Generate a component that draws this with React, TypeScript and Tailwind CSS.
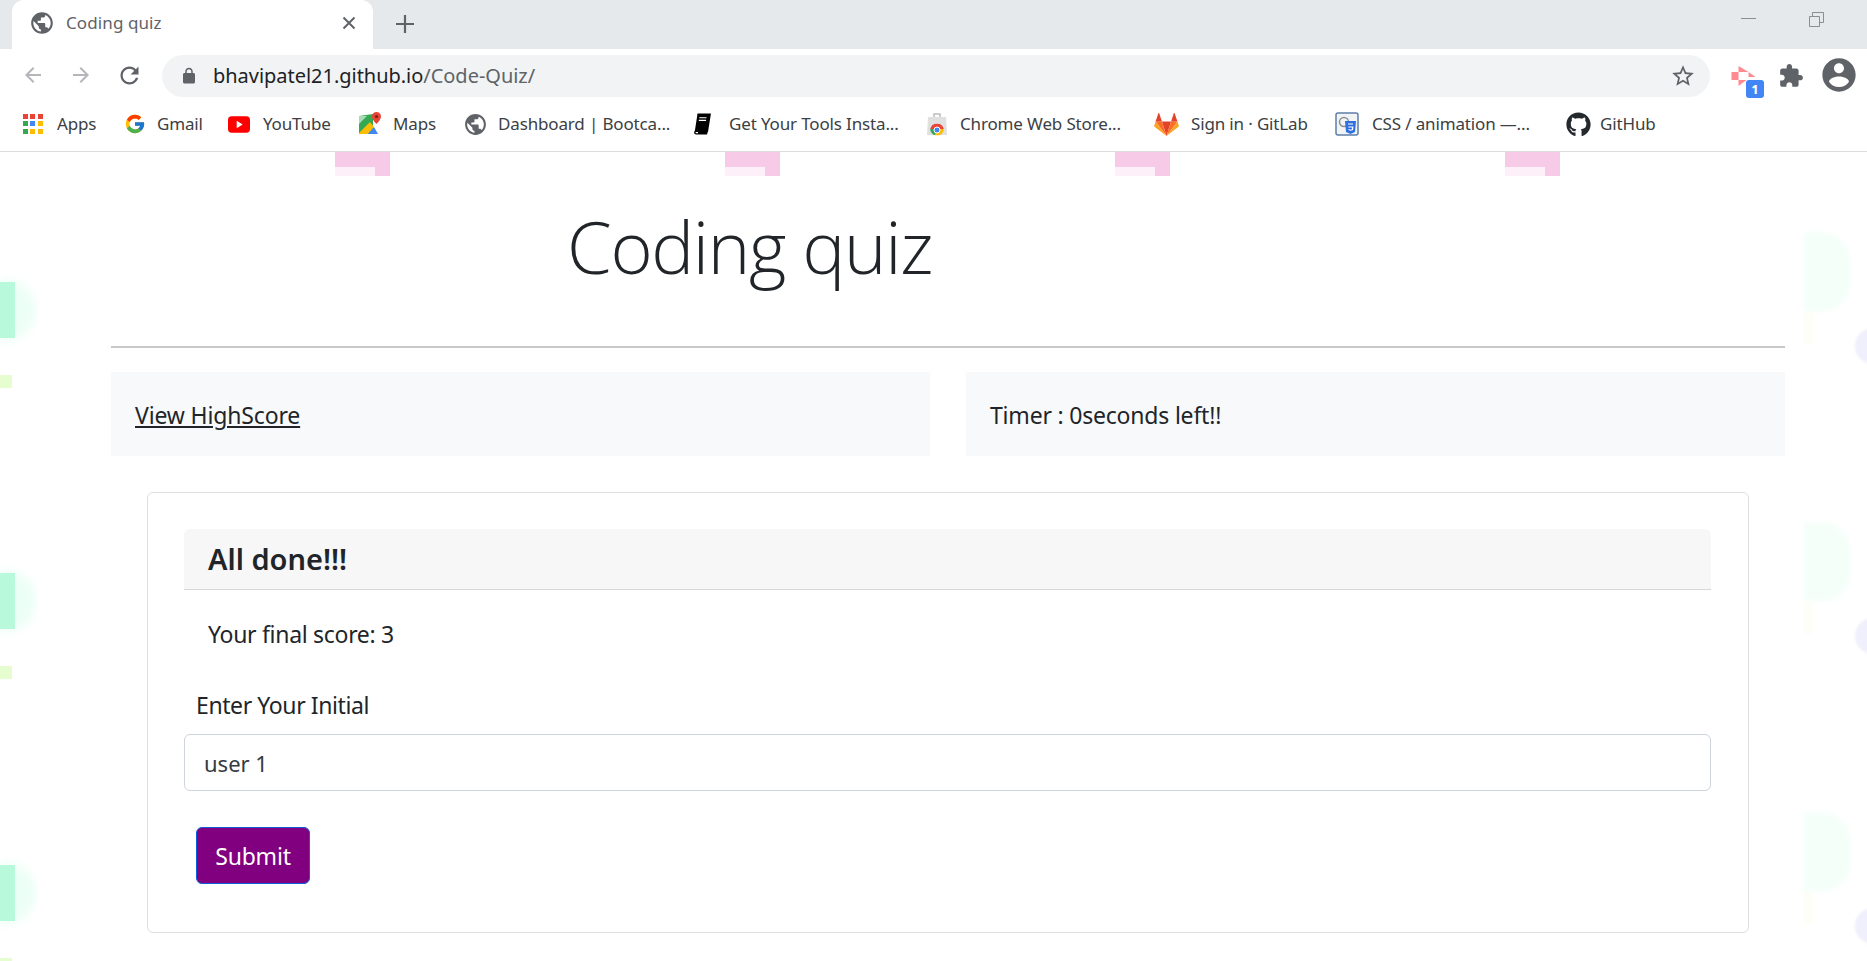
import { FaGithub } from 'react-icons/fa'
import { FcGoogle } from 'react-icons/fc'

const GLOBE = 'M12 2C6.48 2 2 6.48 2 12s4.48 10 10 10 10-4.48 10-10S17.52 2 12 2zm-1 17.93c-3.95-.49-7-3.85-7-7.93 0-.62.08-1.21.21-1.79L9 15v1c0 1.1.9 2 2 2v1.93zm6.9-2.54c-.26-.81-1-1.39-1.9-1.39h-1v-3c0-.55-.45-1-1-1H8v-2h2c.55 0 1-.45 1-1V7h2c1.1 0 2-.9 2-2v-.41c2.93 1.19 5 4.06 5 7.41 0 2.08-.8 3.97-2.1 5.39z'

function MaterialIcon({ d, className }: { d: string; className: string }) {
  return (
    <svg viewBox="0 0 24 24" fill="currentColor" className={className}>
      <path d={d} />
    </svg>
  )
}

function AppsIcon() {
  const colors = ['#ea4335', '#ea4335', '#ea4335', '#34a853', '#4285f4', '#fbbc04', '#34a853', '#fbbc04', '#fbbc04']
  return (
    <div className="grid grid-cols-3 gap-[2px] w-[20px] h-[20px]">
      {colors.map((c, i) => (
        <span key={i} className="block w-[5px] h-[5px]" style={{ backgroundColor: c }} />
      ))}
    </div>
  )
}

function YoutubeIcon() {
  return (
    <svg viewBox="0 0 24 18" className="w-[22px] h-[17px]">
      <rect width="24" height="18" rx="4" fill="#f00" />
      <path d="M9.5 5l6.5 4-6.5 4z" fill="#fff" />
    </svg>
  )
}

function MapsIcon() {
  return (
    <svg viewBox="0 0 24 24" className="w-[24px] h-[24px]">
      <path d="M1 4l14-2v20H1z" fill="#34a853" />
      <path d="M1 21L12 10l4 5-6 7H1z" fill="#fbbc04" />
      <path d="M10 22l6-7 4 7z" fill="#4285f4" />
      <path d="M1 4h8L1 12z" fill="#a8dab5" />
      <path d="M18.5 0a4.5 4.5 0 0 0-4.5 4.5c0 3.2 4.5 7.5 4.5 7.5S23 7.700 23 4.500A4.500 4.500 0 0 0 18.500 0z" fill="#ea4335" />
      <circle cx="18.500" cy="4.500" r="1.600" fill="#7c1d16" />
    </svg>
  )
}

function BookIcon() {
  return (
    <svg viewBox="0 0 20 24" className="w-[18px] h-[22px]">
      <path d="M5 1h14l-3 19H3a2 2 0 0 0-1 1.500C2 23 3 23 3.500 23H15l.3-1.500H5.500" fill="none" stroke="#000" strokeWidth="1.600" />
      <path d="M5 1h14l-3 19H2z" fill="#000" />
      <path d="M7 5h8M6.500 8h8" stroke="#fff" strokeWidth="1.200" />
    </svg>
  )
}

function WebStoreIcon() {
  return (
    <svg viewBox="0 0 24 24" className="w-[24px] h-[24px]">
      <path d="M9 5V2h6v3" fill="none" stroke="#bdbdbd" strokeWidth="1.500" />
      <path d="M3 5h18l1 18H2z" fill="#e0e0e0" />
      <path d="M5.200 17a7 7 0 0 1 13.600 0h-6.800z" fill="#ea4335" />
      <path d="M5.200 17a7 7 0 0 0 5 6.300L12 17z" fill="#34a853" />
      <path d="M18.800 17a7 7 0 0 1-5 6.300H10L12 17z" fill="#fbbc04" />
      <circle cx="12" cy="18" r="3" fill="#4285f4" stroke="#fff" strokeWidth="1" />
    </svg>
  )
}

function GitlabIcon() {
  return (
    <svg viewBox="0 0 24 24" className="w-[25px] h-[25px]">
      <path d="M12 23L16.400 9H7.600z" fill="#e24329" />
      <path d="M12 23L7.600 9H1.500z" fill="#fc6d26" />
      <path d="M1.500 9L.2 13.200c-.1.400 0 .800.300 1L12 23z" fill="#fca326" />
      <path d="M1.500 9h6.100L5 1.200c-.1-.400-.700-.400-.800 0z" fill="#e24329" />
      <path d="M12 23l4.400-14h6.100z" fill="#fc6d26" />
      <path d="M22.500 9l1.300 4.200c.1.400 0 .800-.300 1L12 23z" fill="#fca326" />
      <path d="M22.500 9h-6.100L19 1.200c.1-.400.700-.400.800 0z" fill="#e24329" />
    </svg>
  )
}

function CssIcon() {
  return (
    <svg viewBox="0 0 24 24" className="w-[24px] h-[24px]">
      <rect x="1" y="1" width="22" height="22" rx="2" fill="#f1f3f4" stroke="#5f7fa8" strokeWidth="1.500" />
      <circle cx="9" cy="10" r="4.500" fill="none" stroke="#8a8f96" strokeWidth="1.500" />
      <path d="M10 9h11l-1 11-4.500 2-4.500-2z" fill="#2f6fe0" />
      <path d="M13 12h5M13.300 15h4.500l-.3 2.500-2 .7-2-.7" fill="none" stroke="#fff" strokeWidth="1.200" />
    </svg>
  )
}

const bookmarks = [
  { label: 'Apps', icon: <AppsIcon />, box: 'w-[124px] pl-[23px] gap-[14px]' },
  { label: 'Gmail', icon: <FcGoogle className="w-[22px] h-[22px]" />, box: 'w-[104px] gap-[11px]' },
  { label: 'YouTube', icon: <YoutubeIcon />, box: 'w-[130px] gap-[13px]' },
  { label: 'Maps', icon: <MapsIcon />, box: 'w-[105px] gap-[11px]' },
  { label: 'Dashboard | Bootca...', icon: <MaterialIcon d={GLOBE} className="w-[25px] h-[25px] text-[#5f6368]" />, box: 'w-[230px] gap-[10px]' },
  { label: 'Get Your Tools Insta...', icon: <BookIcon />, box: 'w-[232px] gap-[18px]' },
  { label: 'Chrome Web Store...', icon: <WebStoreIcon />, box: 'w-[229px] gap-[11px]' },
  { label: 'Sign in · GitLab', icon: <GitlabIcon />, box: 'w-[181px] gap-[12px]' },
  { label: 'CSS / animation —...', icon: <CssIcon />, box: 'w-[231px] gap-[13px]' },
  { label: 'GitHub', icon: <FaGithub className="w-[25px] h-[25px] text-[#24292e]" />, box: 'gap-[9px]' },
]

function BrowserChrome() {
  return (
    <header className="shrink-0 bg-white font-['Noto_Sans',sans-serif]">
      <div className="h-[49px] bg-[#e6e9ec] flex items-end pl-[12px] relative">
        <div className="w-[361px] h-[49px] bg-white rounded-t-[12px] flex items-center pl-[17px] pr-[17px] pb-[4px]">
          <MaterialIcon d={GLOBE} className="w-[26px] h-[26px] text-[#5f6368]" />
          <span className="ml-[11px] text-[17px] tracking-[0.1px] text-[#5f6368] flex-1">Coding quiz</span>
          <svg viewBox="0 0 14 14" className="w-[14px] h-[14px]">
            <path d="M1.500 1.500l11 11M12.500 1.500l-11 11" stroke="#5f6368" strokeWidth="2" />
          </svg>
        </div>
        <svg viewBox="0 0 18 18" className="w-[18px] h-[18px] ml-[23px] mb-[16px]">
          <path d="M9 0v18M0 9h18" stroke="#5f6368" strokeWidth="2.200" />
        </svg>
        <div className="absolute top-[18px] left-[1741px] w-[15px] h-px bg-[#8a8d91]" />
        <svg viewBox="0 0 15 15" className="absolute top-[12px] left-[1809px] w-[15px] h-[15px]">
          <path d="M.5 4.500h10v10H.5zM3.500 4.500v-4h11v10h-4" fill="none" stroke="#8a8d91" />
        </svg>
      </div>

      <div className="h-[48px] flex items-center pl-[21px] relative">
        <MaterialIcon d="M20 11H7.830l5.590-5.590L12 4l-8 8 8 8 1.410-1.410L7.830 13H20v-2z" className="w-[24px] h-[24px] mt-[4px] text-[#b4b6b9]" />
        <MaterialIcon d="M12 4l-1.410 1.410L16.170 11H4v2h12.170l-5.580 5.590L12 20l8-8z" className="w-[24px] h-[24px] mt-[4px] text-[#b4b6b9] ml-[24px]" />
        <MaterialIcon d="M17.650 6.350C16.200 4.900 14.210 4 12 4c-4.420 0-7.990 3.580-7.990 8s3.570 8 7.990 8c3.730 0 6.840-2.550 7.730-6h-2.080c-.820 2.330-3.040 4-5.650 4-3.310 0-6-2.690-6-6s2.690-6 6-6c1.660 0 3.140.690 4.220 1.780L13 11h7V4l-2.350 2.350z" className="w-[27px] h-[27px] mt-[4px] text-[#5f6368] ml-[23px]" />
        <div className="ml-[19px] w-[1548px] h-[42px] mt-[6px] rounded-full bg-[#f1f3f4] flex items-center pl-[18px] pr-[14px]">
          <MaterialIcon d="M18 8h-1V6c0-2.760-2.240-5-5-5S7 3.240 7 6v2H6c-1.100 0-2 .900-2 2v10c0 1.100.900 2 2 2h12c1.100 0 2-.900 2-2V10c0-1.100-.900-2-2-2zM9 6c0-1.660 1.340-3 3-3s3 1.340 3 3v2H9V6z" className="w-[18px] h-[18px] text-[#5f6368]" />
          <span className="ml-[15px] text-[20px] leading-none flex-1 tracking-[-0.03px] text-[#202124]">
            bhavipatel21.github.io<span className="text-[#5f6368]">/Code-Quiz/</span>
          </span>
          <MaterialIcon d="M22 9.240l-7.190-.620L12 2 9.190 8.630 2 9.240l5.460 4.730L5.820 21 12 17.270 18.180 21l-1.630-7.030L22 9.240zM12 15.400l-3.760 2.270 1-4.280-3.320-2.880 4.380-.380L12 6.100l1.710 4.040 4.380.380-3.320 2.880 1 4.280L12 15.400z" className="w-[26px] h-[26px] text-[#5f6368]" />
        </div>
        <div className="absolute left-[1731px] top-[17px] w-[33px] h-[32px]">
          <svg viewBox="0 0 24 20" className="absolute left-0 top-0 w-[25px] h-[20px]">
            <path d="M7 0l10 6H7zM0 6h7v8H0zM7 14h8l-8 6zM17 6l7 5h-7z" fill="#ff8a8f" />
          </svg>
          <span className="absolute right-0 bottom-0 w-[18px] h-[18px] rounded-[3px] bg-[#4285f4] text-white text-[13px] font-bold leading-[18px] text-center">1</span>
        </div>
        <MaterialIcon d="M20.500 11H19V7c0-1.100-.900-2-2-2h-4V3.500C13 2.120 11.880 1 10.500 1S8 2.120 8 3.500V5H4c-1.100 0-1.990.900-1.990 2v3.800H3.500c1.490 0 2.700 1.210 2.700 2.700s-1.210 2.700-2.700 2.700H2V20c0 1.100.900 2 2 2h3.800v-1.500c0-1.490 1.210-2.700 2.700-2.700 1.490 0 2.700 1.210 2.700 2.700V22H17c1.100 0 2-.900 2-2v-4h1.500c1.380 0 2.500-1.120 2.500-2.500S21.880 11 20.500 11z" className="absolute left-[1778px] top-[14px] w-[26px] h-[26px] text-[#5f6368]" />
        <MaterialIcon d="M12 2C6.480 2 2 6.480 2 12s4.480 10 10 10 10-4.480 10-10S17.520 2 12 2zm0 3c1.660 0 3 1.340 3 3s-1.340 3-3 3-3-1.340-3-3 1.340-3 3-3zm0 14.200c-2.500 0-4.710-1.280-6-3.220.030-1.990 4-3.080 6-3.080 1.990 0 5.970 1.090 6 3.080-1.290 1.940-3.500 3.220-6 3.220z" className="absolute left-[1819px] top-[6px] w-[40px] h-[40px] text-[#5f6368]" />
      </div>

      <div className="h-[55px] flex items-center border-b border-[#dadce0]">
        {bookmarks.map(b => (
          <div key={b.label} className={`flex items-center shrink-0 ${b.box}`}>
            {b.icon}
            <span className="text-[17px] tracking-[-0.15px] text-[#3c4043] whitespace-nowrap">{b.label}</span>
          </div>
        ))}
      </div>
    </header>
  )
}

function Backdrop() {
  const pinkRow = [335, 725, 1115, 1505]
  const leftRows = [130, 421, 713]
  const rightRows = [80, 370, 660]
  return (
    <div className="absolute inset-0 overflow-hidden">
      {pinkRow.map(x => (
        <div key={x} className="absolute top-0 w-[55px] h-[24px] bg-[#f7cbe8]" style={{ left: x }}>
          <div className="w-[40px] h-[9px] mt-[15px] bg-[#fdf0f9]" />
        </div>
      ))}
      {leftRows.map(y => (
        <div key={y}>
          <div className="absolute left-0 w-[36px] h-[62px] rounded-r-full bg-[#ecfff6] blur-[4px]" style={{ top: y - 3 }} />
          <div className="absolute left-0 w-[15px] h-[56px] bg-[#b8f9db]" style={{ top: y }} />
          <div className="absolute left-0 w-[12px] h-[13px] bg-[#e6fdcf]" style={{ top: y + 93 }} />
        </div>
      ))}
      {rightRows.map(y => (
        <div key={y}>
          <div className="absolute left-[1803px] w-[48px] h-[80px] rounded-r-[30px] bg-[#f5fffa] blur-[2px]" style={{ top: y }} />
          <div className="absolute left-[1803px] w-[10px] h-[32px] bg-[#fefef8]" style={{ top: y + 80 }} />
          <div className="absolute left-[1855px] w-[36px] h-[36px] rounded-full bg-[#f0effc] blur-[1px]" style={{ top: y + 96 }} />
        </div>
      ))}
    </div>
  )
}

export default function App() {
  return (
    <div className="w-full h-[961px] overflow-hidden flex flex-col bg-white font-['Noto_Sans',sans-serif] text-[#212529]">
      <BrowserChrome />
      <main className="relative flex-1">
        <Backdrop />
        <div className="relative pl-[111px] pr-[82px]">
          <div className="h-[194px] flex items-center pl-[456px] pb-[6px]">
            <h1 className="text-[72px] font-light leading-none font-['Open_Sans',sans-serif] tracking-[-1.3px]">Coding quiz</h1>
          </div>
          <hr className="border-0 h-[2px] bg-[#c8c8c8]" />
          <div className="grid grid-cols-2 gap-[36px] mt-[24px]">
            <div className="h-[84px] bg-[#f8f9fa] flex items-center px-[24px] pt-[2px]">
              <a href="#" className="text-[23px] tracking-[-0.15px] underline">View HighScore</a>
            </div>
            <div className="h-[84px] bg-[#f8f9fa] flex items-center px-[24px] pt-[2px]">
              <span className="text-[23px] tracking-[-0.2px]">Timer : 0seconds left!!</span>
            </div>
          </div>

          <section className="mt-[36px] mx-[36px] h-[441px] border-[1.5px] border-[#dfdfdf] rounded-[6px] pt-[36px] pb-[36px] pl-[36px] pr-[37px] bg-white/70">
            <div className="h-[61px] bg-[#f7f7f7] border-b-[1.5px] border-[#d8d8d8] rounded-t-[6px] flex items-center px-[24px]">
              <h2 className="text-[29px] font-semibold">All done!!!</h2>
            </div>
            <p className="mt-[29px] pl-[24px] text-[23px] leading-[30px] tracking-[-0.3px]">Your final score: 3</p>
            <label className="block mt-[41px] pl-[12px] text-[23px] leading-[30px] tracking-[-0.4px]">Enter Your Initial</label>
            <input
              readOnly
              value="user 1"
              className="block w-full h-[57px] mt-[14px] px-[19px] border-[1.5px] border-[#ced4da] rounded-[6px] bg-white text-[22px] text-[#343a40] outline-none"
            />
            <button className="block ml-[12px] mt-[36px] w-[114px] h-[57px] pt-[2px] rounded-[6px] bg-[#800080] border-[1.5px] border-[#0b5ed7] text-white text-[23px] tracking-[-0.2px]">
              Submit
            </button>
          </section>
        </div>
      </main>
    </div>
  )
}
